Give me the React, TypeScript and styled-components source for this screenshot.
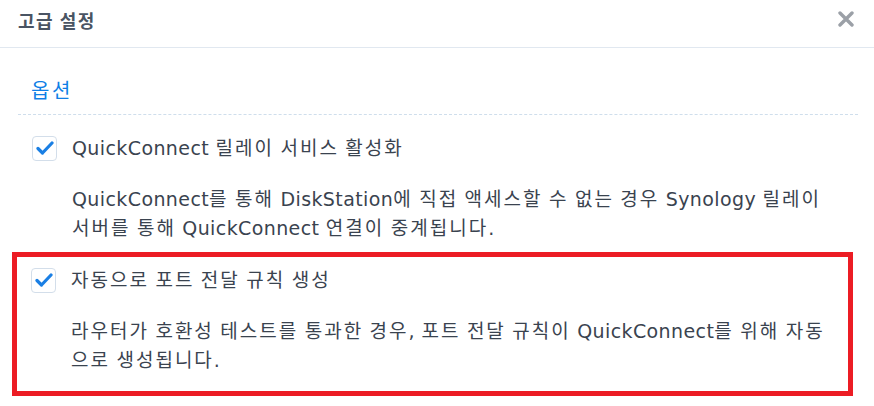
import React from 'react';
import styled, { createGlobalStyle } from 'styled-components';

const GlobalStyle = createGlobalStyle`
  html, body {
    margin: 0;
    padding: 0;
    background: #fff;
  }
  body {
    font-family: "DejaVu Sans", "Noto Sans CJK KR", sans-serif;
    color: #3a434f;
  }
`;

const Dialog = styled.div`
  width: 874px;
  height: 406px;
  background: #fff;
  overflow: hidden;
`;

const Header = styled.div`
  height: 48px;
  box-sizing: border-box;
  border-bottom: 1px solid #e1e8f0;
  display: flex;
  align-items: center;
  justify-content: space-between;
  padding: 0 20px 0 18px;
`;

const Title = styled.h1`
  margin: -8px 0 0;
  font-family: "Noto Sans CJK KR", sans-serif;
  font-size: 18px;
  font-weight: 700;
  letter-spacing: 1.5px;
  color: #4a5463;
  line-height: 24px;
`;

const CloseButton = styled.button`
  border: 0;
  background: none;
  padding: 0;
  width: 16px;
  height: 16px;
  margin-top: -9px;
  display: flex;
  cursor: pointer;
`;

const Body = styled.div`
  padding: 0 16px 0 18px;
`;

const SectionTitle = styled.h2`
  margin: 28px 0 0;
  padding: 0 0 10px 13px;
  font-family: "Noto Sans CJK KR", sans-serif;
  font-size: 20px;
  font-weight: 400;
  letter-spacing: 2.5px;
  line-height: 28px;
  color: #0f7fe6;
  border-bottom: 1px dashed #cfdeec;
`;

const Highlight = styled.div`
  margin: 9px 5px 0 -6px;
  border: 5px solid #ec1c24;
`;

const Option = styled.div<{ $top: number; $bottom?: number }>`
  padding: ${(p) => p.$top}px 0 ${(p) => p.$bottom ?? 0}px 14px;
`;

const OptionRow = styled.label`
  display: flex;
  align-items: center;
  gap: 15px;
  height: 26px;
`;

const Box = styled.span`
  width: 25px;
  height: 25px;
  box-sizing: border-box;
  border: 1px solid #d3deea;
  border-radius: 4px;
  background: #fff;
  display: flex;
  align-items: center;
  justify-content: center;
  flex: none;
`;

const Label = styled.span`
  font-size: 19px;
  line-height: 26px;
  letter-spacing: 0.4px;
  color: #3a434f;
`;

const Description = styled.p`
  margin: 24px 0 0 40px;
  width: 763px;
  font-size: 19px;
  line-height: 29px;
  letter-spacing: 0.4px;
  color: #3a434f;
`;

// Hangul syllables sit wider than the Latin words around them
const Syllable = styled.span`
  letter-spacing: 2px;
`;

const HANGUL = /([\uAC00-\uD7A3])/;

const Text: React.FC<{ children: string }> = ({ children }) => (
  <>
    {children
      .split(HANGUL)
      .map((part, i) => (i % 2 ? <Syllable key={i}>{part}</Syllable> : part))}
  </>
);

const Check = () => (
  <Box>
    <svg width="18" height="14" viewBox="0 0 18 14">
      <path
        d="M2 7.5 L6.5 12 L16 2"
        fill="none"
        stroke="#1a7fe4"
        strokeWidth="3.2"
        strokeLinecap="round"
        strokeLinejoin="round"
      />
    </svg>
  </Box>
);

const options = [
  {
    label: 'QuickConnect 릴레이 서비스 활성화',
    text: 'QuickConnect를 통해 DiskStation에 직접 액세스할 수 없는 경우 Synology 릴레이 서버를 통해 QuickConnect 연결이 중계됩니다.'
  },
  {
    label: '자동으로 포트 전달 규칙 생성',
    text: '라우터가 호환성 테스트를 통과한 경우, 포트 전달 규칙이 QuickConnect를 위해 자동으로 생성됩니다.'
  }
];

export default function App() {
  return (
    <>
      <GlobalStyle />
      <Dialog>
        <Header>
          <Title>고급 설정</Title>
          <CloseButton aria-label="닫기">
            <svg width="16" height="16" viewBox="0 0 16 16">
              <path
                d="M2 2 L14 14 M14 2 L2 14"
                stroke="#9ba0a7"
                strokeWidth="3.4"
                strokeLinecap="round"
              />
            </svg>
          </CloseButton>
        </Header>
        <Body>
          <SectionTitle>옵션</SectionTitle>
          <Option $top={20}>
            <OptionRow>
              <Check />
              <Label>
                <Text>{options[0].label}</Text>
              </Label>
            </OptionRow>
            <Description>
              <Text>{options[0].text}</Text>
            </Description>
          </Option>
          <Highlight>
            <Option $top={10} $bottom={16}>
              <OptionRow>
                <Check />
                <Label>
                  <Text>{options[1].label}</Text>
                </Label>
              </OptionRow>
              <Description>
                <Text>{options[1].text}</Text>
              </Description>
            </Option>
          </Highlight>
        </Body>
      </Dialog>
    </>
  );
}
